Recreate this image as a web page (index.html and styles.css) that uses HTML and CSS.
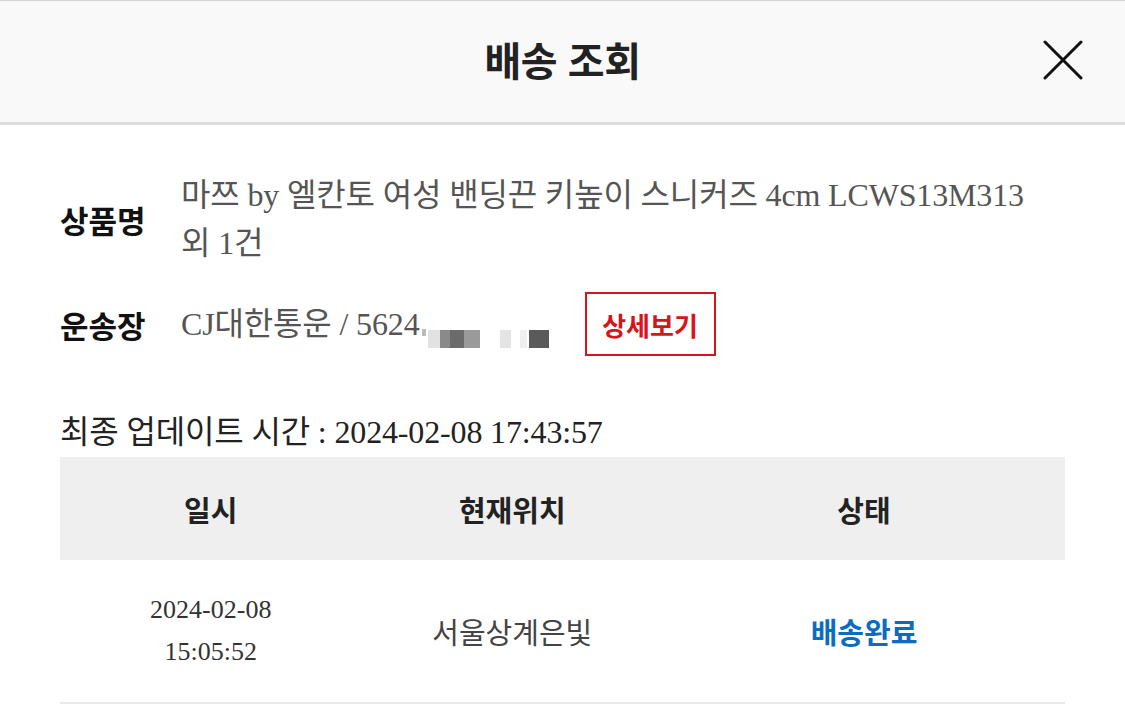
FILE: index.html
```html
<!DOCTYPE html>
<html lang="ko">
<head>
  <meta charset="UTF-8">
  <meta name="viewport" content="width=device-width, initial-scale=1.0">
  <title>배송 조회</title>
  <link rel="stylesheet" href="styles.css">
</head>
<body>
  <header class="top-bar">
    <div></div>
    <h1>배송 조회</h1>
    <button class="close-btn" type="button" aria-label="닫기">
      <svg width="40" height="40" viewBox="0 0 40 40">
        <path d="M2 2 L38 38 M38 2 L2 38" stroke="#111" stroke-width="3" stroke-linecap="round" fill="none"/>
      </svg>
    </button>
  </header>

  <main class="content">
    <!-- 상품 / 운송장 정보 -->
    <div class="info-row">
      <span class="info-label">상품명</span>
      <p class="info-value">마쯔 by 엘칸토 여성 밴딩끈 키높이 스니커즈 4cm LCWS13M313<br>외 1건</p>
    </div>

    <div class="info-row waybill">
      <span class="info-label">운송장</span>
      <p class="info-value">CJ대한통운 / 5624<span class="mask">
        <i class="px px-tick"></i><i class="px px-a"></i><i class="px px-b"></i><i class="px px-c"></i><i class="px px-d"></i><i class="px px-e"></i>
      </span></p>
      <a class="detail-btn" href="#">상세보기</a>
    </div>

    <p class="updated">최종 업데이트 시간 : 2024-02-08 17:43:57</p>

    <table class="track-table">
      <thead>
        <tr>
          <th class="col-date">일시</th>
          <th class="col-place">현재위치</th>
          <th class="col-state">상태</th>
        </tr>
      </thead>
      <tbody>
        <tr>
          <td class="date">2024-02-08<br>15:05:52</td>
          <td class="place">서울상계은빛</td>
          <td class="state">배송완료</td>
        </tr>
      </tbody>
    </table>
  </main>
</body>
</html>
```

FILE: styles.css
```css
body {
  margin: 0;
  padding: 0;
  background: #fff;
  font-family: "Liberation Serif", "Noto Sans CJK KR", serif;
  color: #222;
}

.top-bar {
  display: grid;
  grid-template-columns: 1fr auto 1fr;
  align-items: center;
  height: 121px;
  background: #f9f9f9;
  border-top: 1px solid #d4d4d4;
  border-bottom: 3px solid #dcdcdc;
}

.top-bar h1 {
  margin: 0 0 6px;
  font-family: "Noto Sans CJK KR", sans-serif;
  font-size: 40px;
  font-weight: 700;
  color: #222;
  letter-spacing: -0.5px;
}

.close-btn {
  justify-self: end;
  margin-right: 42px;
  margin-bottom: 3px;
  padding: 0;
  width: 40px;
  height: 40px;
  border: none;
  background: none;
  cursor: pointer;
}

.close-btn svg {
  display: block;
}

.content {
  padding: 46px 60px 0;
}

.info-row {
  display: flex;
  align-items: center;
}

.info-label {
  flex: 0 0 121px;
  font-family: "Noto Sans CJK KR", sans-serif;
  font-size: 31px;
  font-weight: 700;
  color: #111;
}

.info-value {
  margin: 0;
  font-size: 32px;
  line-height: 48px;
  color: #555;
  letter-spacing: -0.15px;
}

.waybill {
  margin-top: 25px;
}

.mask {
  display: inline-flex;
  align-items: center;
  height: 20px;
  vertical-align: -1px;
}

.px {
  display: inline-block;
  height: 18px;
}

.px-tick {
  width: 4px;
  height: 7px;
  margin-left: 2px;
  align-self: flex-start;
  background: #bbb;
}

.px-a {
  width: 12px;
  margin-left: 2px;
  background: #e2e2e2;
}

.px-b {
  width: 40px;
  background: linear-gradient(90deg, #8a8a8a 0 25%, #6b6b6b 25% 60%, #9a9a9a 60% 100%);
}

.px-c {
  width: 11px;
  margin-left: 20px;
  background: #e4e4e4;
}

.px-d {
  width: 7px;
  margin-left: 9px;
  background: #efefef;
}

.px-e {
  width: 20px;
  margin-left: 2px;
  background: #5a5a5a;
}

.detail-btn {
  display: flex;
  align-items: center;
  justify-content: center;
  box-sizing: border-box;
  width: 131px;
  height: 64px;
  margin-left: 36px;
  border: 2px solid #d7141c;
  font-family: "Noto Sans CJK KR", sans-serif;
  font-size: 26px;
  font-weight: 700;
  color: #d7141c;
  text-decoration: none;
}

.updated {
  margin: 54px 0 0;
  font-size: 32px;
  line-height: 44px;
  color: #222;
  letter-spacing: -0.15px;
}

.track-table {
  width: 100%;
  margin-top: 3px;
  border-collapse: collapse;
}

.track-table th {
  height: 103px;
  padding: 0;
  background: #efefef;
  font-family: "Noto Sans CJK KR", sans-serif;
  font-size: 29px;
  font-weight: 700;
  color: #222;
}

.col-date,
.col-place {
  width: 30%;
}

.track-table td {
  height: 142px;
  padding: 0;
  text-align: center;
  border-bottom: 2px solid #e8e8e8;
}

.date {
  font-size: 26px;
  line-height: 42px;
  color: #333;
}

.place {
  font-family: "Noto Sans CJK KR", sans-serif;
  font-size: 29px;
  color: #444;
}

.state {
  font-family: "Noto Sans CJK KR", sans-serif;
  font-size: 29px;
  font-weight: 700;
  color: #0b6cc4;
}
```
